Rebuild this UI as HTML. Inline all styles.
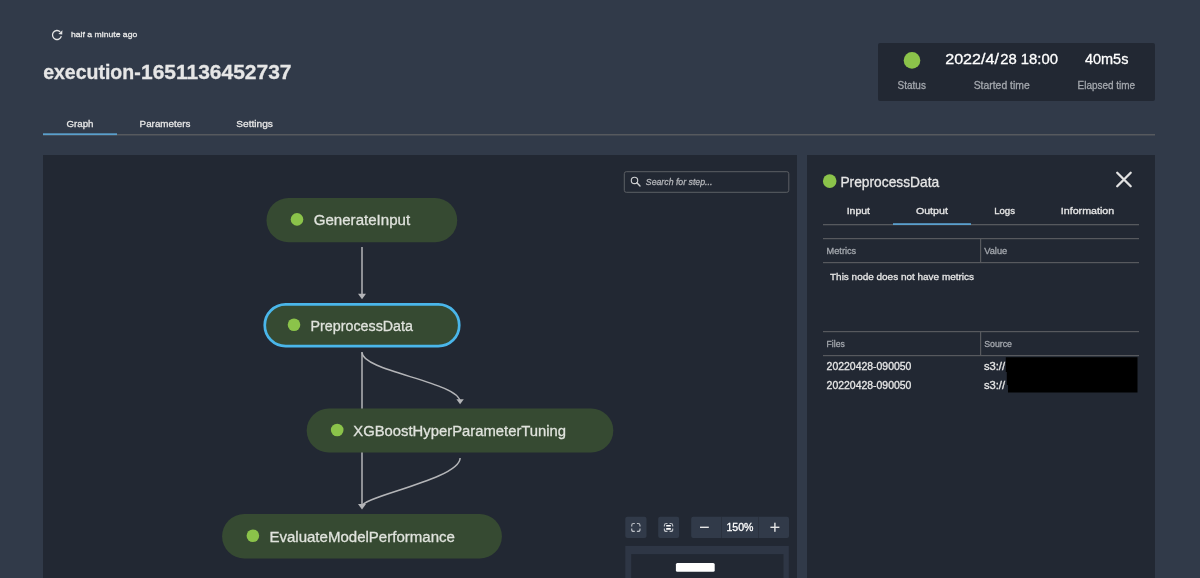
<!DOCTYPE html>
<html><head><meta charset="utf-8">
<style>
html,body{margin:0;padding:0;width:1200px;height:578px;overflow:hidden;background:#313a49;}
svg{display:block;will-change:transform;}
text{font-family:"Liberation Sans",sans-serif;stroke-width:0.3px;}
</style></head><body>
<svg width="1200" height="578" viewBox="0 0 1200 578">
<rect x="0" y="0" width="1200" height="578" fill="#313a49"/>

<!-- header -->
<path d="M61.35 36.16 A4.5 4.5 0 1 1 60.18 31.82" fill="none" stroke="#e6e6e6" stroke-width="1.3"/>
<path d="M62.4 30.2 L58.4 33.9 L62.2 34.4 Z" fill="#e6e6e6"/>
<text x="71" y="37.1" font-size="8.1" fill="#e6e6e6" stroke="#e6e6e6" stroke-width="0.45" textLength="66.3" lengthAdjust="spacingAndGlyphs">half a minute ago</text>
<text x="43.2" y="79" font-size="20" font-weight="bold" fill="#e6e6e6" stroke="#e6e6e6" textLength="97.5" lengthAdjust="spacingAndGlyphs">execution-</text><text x="141" y="79" font-size="20" font-weight="bold" fill="#e6e6e6" stroke="#e6e6e6" textLength="150.5" lengthAdjust="spacingAndGlyphs">1651136452737</text>

<!-- status box -->
<rect x="878" y="43" width="277" height="58" rx="2" fill="#222833"/>
<circle cx="912" cy="60.4" r="8.3" fill="#8bc34a"/>
<text x="945.2" y="64.3" font-size="14.8" fill="#ffffff" stroke="#ffffff" textLength="53.8" lengthAdjust="spacingAndGlyphs">2022/4/</text><text x="1000.2" y="64.3" font-size="14.8" fill="#ffffff" stroke="#ffffff" textLength="57.8" lengthAdjust="spacingAndGlyphs">28 18:00</text>
<text x="1084.9" y="64.3" font-size="15.2" fill="#ffffff" stroke="#ffffff" textLength="43.5" lengthAdjust="spacingAndGlyphs">40m5s</text>
<text x="897.6" y="88.5" font-size="10.5" fill="#a3a7ad" stroke="#a3a7ad" textLength="28.3" lengthAdjust="spacingAndGlyphs">Status</text>
<text x="973.7" y="88.5" font-size="10.5" fill="#a3a7ad" stroke="#a3a7ad" textLength="56" lengthAdjust="spacingAndGlyphs">Started time</text>
<text x="1077.6" y="88.5" font-size="10.5" fill="#a3a7ad" stroke="#a3a7ad" textLength="57.5" lengthAdjust="spacingAndGlyphs">Elapsed time</text>

<!-- tabs -->
<text x="66.5" y="127" font-size="9.8" fill="#e6e6e6" stroke="#e6e6e6" stroke-width="0.45" textLength="27" lengthAdjust="spacingAndGlyphs">Graph</text>
<text x="139.6" y="127" font-size="9.8" fill="#e6e6e6" stroke="#e6e6e6" stroke-width="0.45" textLength="50.8" lengthAdjust="spacingAndGlyphs">Parameters</text>
<text x="236.25" y="127" font-size="9.8" fill="#e6e6e6" stroke="#e6e6e6" stroke-width="0.45" textLength="36.6" lengthAdjust="spacingAndGlyphs">Settings</text>
<rect x="43" y="134" width="1112" height="1.5" fill="#56595e"/>
<rect x="43" y="133.3" width="74" height="1.8" fill="#5a9fcc"/>

<!-- graph panel -->
<rect x="43" y="155" width="754" height="423" fill="#222833"/>

<!-- edges -->
<g fill="none" stroke="#b4b5b8" stroke-width="1.5">
  <path d="M362 247 L362 296"/>
  <path d="M362 352 L362 506"/>
  <path d="M362 352.6 C362 371.4 460.1 382.2 460.1 402"/>
  <path d="M460.1 457.9 C460.1 478.9 362 496.6 362 506"/>
</g>
<g fill="#b4b5b8">
  <path d="M358 293.8 L366 293.8 L362 299.3 Z"/>
  <path d="M358 504 L366 504 L362 509.5 Z"/>
  <path d="M456.4 399.2 L463.8 399.2 L460.1 404.3 Z"/>
</g>

<!-- nodes -->
<rect x="266.5" y="198" width="190.7" height="44.3" rx="22.15" fill="#364a32"/>
<circle cx="297" cy="219.4" r="6.3" fill="#8bc34a"/>
<text x="313.7" y="225.3" font-size="15.3" fill="#e0e3dd" stroke="#e0e3dd" stroke-width="0.45" textLength="96.5" lengthAdjust="spacingAndGlyphs">GenerateInput</text>

<rect x="264.75" y="304.4" width="194.5" height="41.8" rx="20.9" fill="#364a32" stroke="#4ab6ea" stroke-width="2.7"/>
<circle cx="294" cy="324.8" r="6.3" fill="#8bc34a"/>
<text x="310.5" y="330.6" font-size="15.3" fill="#e0e3dd" stroke="#e0e3dd" stroke-width="0.45" textLength="102.5" lengthAdjust="spacingAndGlyphs">PreprocessData</text>

<rect x="306.7" y="408.5" width="306.6" height="44" rx="22" fill="#364a32"/>
<circle cx="337.2" cy="430" r="6.3" fill="#8bc34a"/>
<text x="353.3" y="435.6" font-size="15.3" fill="#e0e3dd" stroke="#e0e3dd" stroke-width="0.45" textLength="212.8" lengthAdjust="spacingAndGlyphs">XGBoostHyperParameterTuning</text>

<rect x="222.1" y="514" width="279.8" height="44.4" rx="22.2" fill="#364a32"/>
<circle cx="252.9" cy="535.7" r="6.3" fill="#8bc34a"/>
<text x="269.4" y="541.7" font-size="15.3" fill="#e0e3dd" stroke="#e0e3dd" stroke-width="0.45" textLength="185.5" lengthAdjust="spacingAndGlyphs">EvaluateModelPerformance</text>

<!-- search -->
<rect x="624.3" y="171.7" width="164.5" height="20.6" rx="2" fill="#222833" stroke="#5c5f64" stroke-width="1"/>
<g fill="none" stroke="#cfd0d2" stroke-width="1.15">
  <circle cx="634.5" cy="180.4" r="3.2"/>
  <path d="M636.9 182.8 L640 185.9" stroke-width="1.4" stroke-linecap="round"/>
</g>
<text x="645.8" y="185.4" font-size="9.8" font-style="italic" fill="#b4b6ba" stroke="#b4b6ba" textLength="66.6" lengthAdjust="spacingAndGlyphs">Search for step...</text>

<!-- zoom controls -->
<rect x="625.3" y="516.8" width="21.2" height="21.2" rx="2" fill="#313a49"/>
<rect x="658.2" y="516.8" width="20.9" height="21.2" rx="2" fill="#313a49"/>
<rect x="691.2" y="516.8" width="97.8" height="21.2" rx="2" fill="#313a49"/>
<rect x="721" y="516.8" width="1" height="21.2" fill="#2a313e"/>
<rect x="758" y="516.8" width="1" height="21.2" fill="#2a313e"/>
<g fill="none" stroke="#bcc0c6" stroke-width="1.15">
  <path d="M631.7 526.4 V525.4 Q631.7 523.5 633.6 523.5 H634.8"/>
  <path d="M636.9 523.5 H638.1 Q640 523.5 640 525.4 V526.4"/>
  <path d="M640 528.4 V529.4 Q640 531.4 638.1 531.4 H636.9"/>
  <path d="M634.8 531.4 H633.6 Q631.7 531.4 631.7 529.4 V528.4"/>
  <path d="M664.4 526.4 V525.4 Q664.4 523.5 666.3 523.5 H667.5"/>
  <path d="M669.6 523.5 H670.8 Q672.7 523.5 672.7 525.4 V526.4"/>
  <path d="M672.7 528.4 V529.4 Q672.7 531.4 670.8 531.4 H669.6"/>
  <path d="M667.5 531.4 H666.3 Q664.4 531.4 664.4 529.4 V528.4"/>
</g>
<rect x="666.1" y="525" width="4.8" height="1.6" rx="0.5" fill="#ffffff"/>
<rect x="666.1" y="528.1" width="4.8" height="1.6" rx="0.5" fill="#ffffff"/>
<rect x="700" y="526.6" width="8.8" height="1.4" fill="#e6e6e6"/>
<rect x="770.4" y="526.6" width="9" height="1.4" fill="#e6e6e6"/>
<rect x="774.2" y="522.7" width="1.4" height="9.1" fill="#e6e6e6"/>
<text x="726.5" y="531.2" font-size="11" fill="#ffffff" stroke="#ffffff" stroke-width="0.2" textLength="27" lengthAdjust="spacingAndGlyphs">150%</text>

<!-- minimap -->
<rect x="625.3" y="545.9" width="163.5" height="40" fill="#2e3645"/>
<rect x="631.2" y="554.1" width="152.3" height="40" fill="#222833"/>
<rect x="675.9" y="562.9" width="38.8" height="8.9" rx="1.5" fill="#ffffff"/>

<!-- right panel -->
<rect x="807" y="155" width="348" height="423" fill="#222833"/>
<circle cx="829.7" cy="181.1" r="6.8" fill="#8bc34a"/>
<text x="840.4" y="186.5" font-size="14.5" fill="#e6e6e6" stroke="#e6e6e6" textLength="98.8" lengthAdjust="spacingAndGlyphs">PreprocessData</text>
<g stroke="#e2e2e2" stroke-width="2.3" stroke-linecap="round"><path d="M1117.2 172.8 L1130.7 186.3 M1130.7 172.8 L1117.2 186.3"/></g>

<text x="846.7" y="214.1" font-size="9.3" fill="#e6e6e6" stroke="#e6e6e6" stroke-width="0.45" textLength="23.3" lengthAdjust="spacingAndGlyphs">Input</text>
<text x="915.9" y="214.1" font-size="9.3" fill="#e6e6e6" stroke="#e6e6e6" stroke-width="0.45" textLength="32" lengthAdjust="spacingAndGlyphs">Output</text>
<text x="994.2" y="214.1" font-size="9.3" fill="#e6e6e6" stroke="#e6e6e6" stroke-width="0.45" textLength="20.8" lengthAdjust="spacingAndGlyphs">Logs</text>
<text x="1060.8" y="214.1" font-size="9.3" fill="#e6e6e6" stroke="#e6e6e6" stroke-width="0.45" textLength="53.4" lengthAdjust="spacingAndGlyphs">Information</text>
<rect x="823" y="224" width="316" height="1.3" fill="#56595e"/>
<rect x="893" y="223.2" width="78" height="1.8" fill="#5a9fcc"/>

<rect x="823" y="238" width="316" height="1.2" fill="#57595e"/>
<rect x="823" y="262" width="316" height="1.2" fill="#57595e"/>
<rect x="980" y="238" width="1.2" height="24" fill="#57595e"/>
<text x="826.6" y="253.9" font-size="9" fill="#a3a7ad" stroke="#a3a7ad" stroke-width="0.3" textLength="29.6" lengthAdjust="spacingAndGlyphs">Metrics</text>
<text x="984.2" y="253.9" font-size="9" fill="#a3a7ad" stroke="#a3a7ad" stroke-width="0.3" textLength="23" lengthAdjust="spacingAndGlyphs">Value</text>
<text x="830" y="279.8" font-size="9.8" fill="#e6e6e6" stroke="#e6e6e6" stroke-width="0.4" textLength="144" lengthAdjust="spacingAndGlyphs">This node does not have metrics</text>

<rect x="823" y="331" width="316" height="1.2" fill="#57595e"/>
<rect x="823" y="355" width="316" height="1.2" fill="#57595e"/>
<rect x="980" y="331" width="1.2" height="24" fill="#57595e"/>
<text x="826.6" y="347.3" font-size="9" fill="#a3a7ad" stroke="#a3a7ad" stroke-width="0.3" textLength="18.2" lengthAdjust="spacingAndGlyphs">Files</text>
<text x="984.2" y="347.3" font-size="9" fill="#a3a7ad" stroke="#a3a7ad" stroke-width="0.3" textLength="27.8" lengthAdjust="spacingAndGlyphs">Source</text>
<text x="826.6" y="369.6" font-size="10.2" fill="#e6e6e6" stroke="#e6e6e6" textLength="84.8" lengthAdjust="spacingAndGlyphs">20220428-090050</text>
<text x="826.6" y="389.2" font-size="10.2" fill="#e6e6e6" stroke="#e6e6e6" textLength="84.8" lengthAdjust="spacingAndGlyphs">20220428-090050</text>
<text x="983.9" y="369.6" font-size="10.2" fill="#e6e6e6" stroke="#e6e6e6" textLength="21.2" lengthAdjust="spacingAndGlyphs">s3://</text>
<text x="983.9" y="389.2" font-size="10.2" fill="#e6e6e6" stroke="#e6e6e6" textLength="21.2" lengthAdjust="spacingAndGlyphs">s3://</text>
<path d="M1005.8 357.3 H1137.5 V392.6 H1008 V385 H1006.8 V372 H1005.8 Z" fill="#000000"/>
</svg>
</body></html>
